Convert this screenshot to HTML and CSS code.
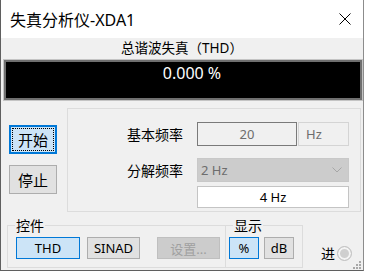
FILE: index.html
```html
<!DOCTYPE html>
<html lang="zh-CN">
<head>
<meta charset="UTF-8">
<meta name="viewport" content="width=device-width, initial-scale=1.0">
<title>失真分析仪-XDA1</title>
<link rel="stylesheet" href="styles.css">
</head>
<body>
    <div class="window">
        <div class="titlebar">
            <span class="title">失真分析仪-XDA1</span>
            <svg class="close" width="12" height="12" viewBox="0 0 12 12">
                <path d="M0.5 0.5 L11.5 11.5 M11.5 0.5 L0.5 11.5" stroke="#000" stroke-width="1" fill="none"/>
            </svg>
        </div>

        <div class="content">
            <div class="thd-title">总谐波失真（THD）</div>
            <div class="display">
                <div class="display-inner">0.000 %</div>
            </div>

            <div class="main-row">
                <div class="side-buttons">
                    <button class="btn big default">开始</button>
                    <button class="btn big">停止</button>
                </div>

                <div class="panel">
                    <div class="row">
                        <label class="row-label">基本频率</label>
                        <div class="num-box">20</div>
                        <div class="unit-box">Hz</div>
                    </div>
                    <div class="row row-gap">
                        <label class="row-label">分解频率</label>
                        <div class="select-box">
                            <span>2 Hz</span>
                            <svg width="10" height="6" viewBox="0 0 10 6">
                                <path d="M0.5 0.5 L5 5 L9.5 0.5" stroke="#a6a6a6" fill="none"/>
                            </svg>
                        </div>
                    </div>
                    <div class="result-box">4 Hz</div>
                </div>
            </div>

            <div class="bottom-row">
                <fieldset class="group group-control">
                    <legend>控件</legend>
                    <div class="btn-row">
                        <button class="btn active w-thd">THD</button>
                        <button class="btn w-sinad">SINAD</button>
                        <button class="btn w-set" disabled>设置...</button>
                    </div>
                </fieldset>
                <fieldset class="group group-show">
                    <legend>显示</legend>
                    <div class="btn-row">
                        <button class="btn active w-unit">%</button>
                        <button class="btn w-unit">dB</button>
                    </div>
                </fieldset>
                <div class="progress">
                    <span>进</span>
                    <span class="radio"></span>
                </div>
            </div>
        </div>

        <svg class="grip" width="8" height="8" viewBox="0 0 8 8">
            <rect x="6" y="0" width="2" height="2" fill="#a8a8a8"/>
            <rect x="3" y="3" width="2" height="2" fill="#a8a8a8"/>
            <rect x="6" y="3" width="2" height="2" fill="#a8a8a8"/>
            <rect x="0" y="6" width="2" height="2" fill="#a8a8a8"/>
            <rect x="3" y="6" width="2" height="2" fill="#a8a8a8"/>
            <rect x="6" y="6" width="2" height="2" fill="#a8a8a8"/>
        </svg>
    </div>
</body>
</html>
```

FILE: styles.css
```css
body {
    margin: 0;
    background-color: #ffffff;
    font-family: "Noto Sans", "Noto Sans CJK SC", sans-serif;
    color: #000;
}
.window {
    position: relative;
    width: 364px;
    height: 271px;
    box-sizing: border-box;
    border-left: 1px solid #5f5f5f;
    border-right: 1px solid #8c8c8c;
    border-bottom: 1px solid #5f5f5f;
    background-color: #f0f0f0;
}
.titlebar {
    height: 38px;
    background-color: #fff;
    display: flex;
    align-items: center;
    padding-left: 9px;
}
.title {
    font-size: 16px;
}
.close {
    margin-left: auto;
    margin-right: 12px;
}
.thd-title {
    height: 21px;
    line-height: 21px;
    text-align: center;
    font-size: 13.5px;
}
.display {
    margin-left: 2px;
    border: 1px solid #c4c4c4;
}
.display-inner {
    border: 2px solid #6f6f6f;
    background-color: #000;
    color: #fff;
    font-size: 16px;
    line-height: 18px;
    padding-top: 2px;
    box-sizing: content-box;
    height: 34px;
    text-align: center;
    padding-left: 18px;
}
.main-row {
    display: flex;
    margin-top: 7px;
    padding-left: 8px;
}
.side-buttons {
    width: 48px;
    margin-right: 10px;
    padding-top: 17px;
    display: flex;
    flex-direction: column;
    gap: 11px;
}
.btn {
    font-family: "Noto Sans", "Noto Sans CJK SC", sans-serif;
    font-size: 13px;
    height: 22px;
    padding: 0;
    border: 1px solid #adadad;
    background-color: #e1e1e1;
    color: #000;
}
.btn.big {
    height: 29px;
    width: 48px;
    font-size: 15px;
}
.btn.default {
    border: 2px solid #0078d7;
    background-color: #cce4f7;
    outline: 1px dotted #000;
    outline-offset: -4px;
}
.btn.active {
    border-color: #0078d7;
    background-color: #cce4f7;
}
.btn:disabled {
    background-color: #cccccc;
    border-color: #bfbfbf;
    color: #a0a0a0;
}
.panel {
    width: 294px;
    height: 104px;
    box-sizing: border-box;
    border: 1px solid #dcdcdc;
    padding: 13px 0 0 59px;
}
.row {
    display: flex;
    height: 24px;
    align-items: center;
}
.row-gap {
    margin-top: 12px;
}
.row-label {
    width: 70px;
    font-size: 14px;
}
.num-box {
    width: 100px;
    height: 24px;
    box-sizing: border-box;
    border: 1px solid #7a7a7a;
    color: #6d6d6d;
    font-size: 13px;
    line-height: 22px;
    text-align: center;
}
.unit-box {
    width: 51px;
    height: 24px;
    margin-left: 1px;
    box-sizing: border-box;
    border: 1px solid #d4d4d4;
    color: #6d6d6d;
    font-size: 13px;
    line-height: 22px;
    padding-left: 7px;
}
.select-box {
    width: 152px;
    height: 24px;
    box-sizing: border-box;
    border: 1px solid #c8c8c8;
    background-color: #cccccc;
    color: #6d6d6d;
    font-size: 13px;
    display: flex;
    align-items: center;
    justify-content: space-between;
    padding: 0 6px 0 3px;
}
.result-box {
    width: 152px;
    height: 22px;
    margin: 4px 0 0 70px;
    box-sizing: border-box;
    border: 1px solid #c4c4c4;
    background-color: #fff;
    font-size: 13px;
    line-height: 20px;
    text-align: center;
}
.bottom-row {
    display: flex;
    margin-top: 5px;
    padding-left: 6px;
}
.group {
    margin: 0;
    border: 1px solid #dcdcdc;
    padding: 3px 0 7px 8px;
    box-sizing: border-box;
    height: 51px;
}
.group legend {
    font-size: 14px;
    line-height: 17px;
    padding: 0 1px;
    margin-left: -1px;
}
.group-control {
    width: 219px;
}
.group-show {
    width: 78px;
    margin-left: -1px;
    padding-left: 3px;
}
.group-show legend {
    margin-left: 4px;
}
.btn-row {
    display: flex;
}
.w-thd {
    width: 64px;
}
.w-sinad {
    width: 53px;
    margin-left: 7px;
}
.w-set {
    width: 63px;
    margin-left: 17px;
}
.w-unit {
    width: 30px;
    margin-right: 5px;
}
.progress {
    display: flex;
    align-items: center;
    align-self: flex-end;
    margin-left: 18px;
    margin-bottom: 5px;
    font-size: 14px;
    gap: 2px;
}
.radio {
    width: 15px;
    height: 15px;
    box-sizing: border-box;
    border-radius: 50%;
    border: 1px solid #c2c2c2;
    background-color: #cfcfcf;
    box-shadow: inset 0 0 0 2px #f4f4f4;
}
.grip {
    position: absolute;
    right: 2px;
    bottom: 1px;
}
```
